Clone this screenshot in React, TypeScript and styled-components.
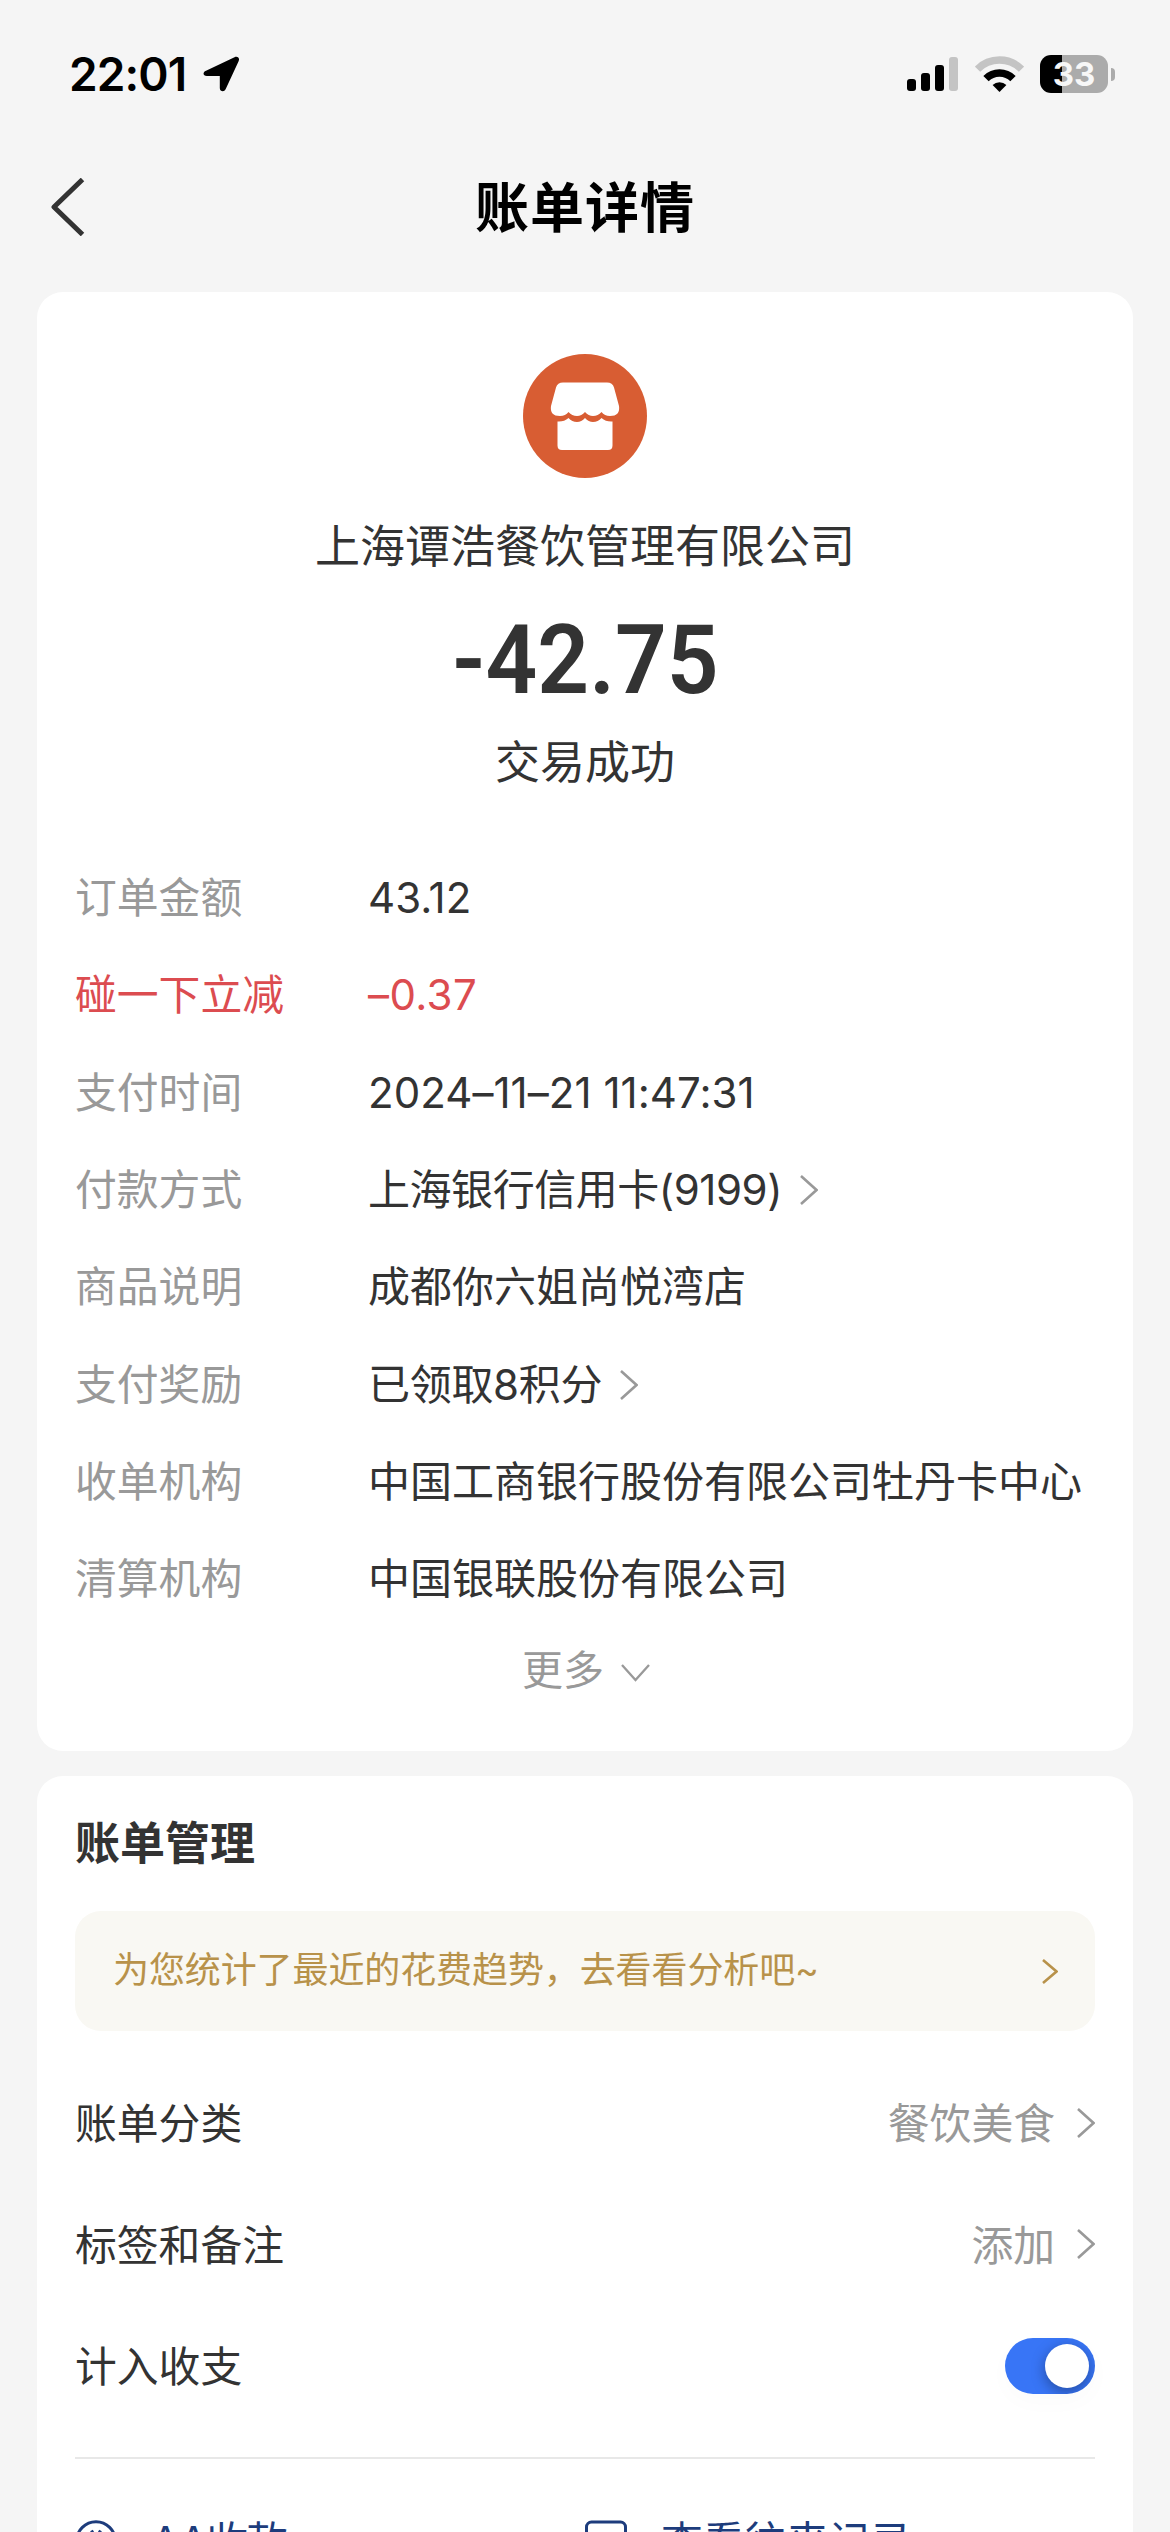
import React from "react";
import styled, { createGlobalStyle } from "styled-components";

const GlobalStyle = createGlobalStyle`
  *, *::before, *::after { box-sizing: border-box; }
  html, body { margin: 0; padding: 0; background: #f5f5f5; }
  body {
    height: 2532px;
    overflow: hidden;
    font-family: Inter, "Noto Sans CJK SC", sans-serif;
    color: #333;
  }
`;

const Screen = styled.div`
  width: 1170px;
  height: 2532px;
  overflow: hidden;
  background: #f5f5f5;
  display: flex;
  flex-direction: column;
`;

const StatusBar = styled.header`
  height: 148px;
  padding: 0 55px 0 69px;
  display: flex;
  align-items: center;
  justify-content: space-between;
  flex: none;
`;

const StatusGroup = styled.div<{ $gap: number }>`
  display: flex;
  align-items: center;
  gap: ${(p) => p.$gap}px;
`;

const Clock = styled.span`
  width: 120px;
  font-size: 46px;
  line-height: 56px;
  font-weight: 600;
  letter-spacing: -0.9px;
  color: #000;
  white-space: nowrap;
`;

const Battery = styled.div`
  display: flex;
  align-items: center;
  gap: 3px;
`;

const BatteryBody = styled.div`
  width: 68px;
  height: 38px;
  border-radius: 11px;
  background: linear-gradient(90deg, #000 0 22px, #ababab 22px);
  color: #f7f7f7;
  font-size: 33px;
  font-weight: 700;
  line-height: 38px;
  text-align: center;
`;

const BatteryCap = styled.div`
  width: 4px;
  height: 13px;
  border-radius: 0 4px 4px 0;
  background: #ababab;
`;

const NavBar = styled.nav`
  height: 144px;
  padding: 0 50px 26px;
  display: grid;
  grid-template-columns: 60px 1fr 60px;
  align-items: center;
  flex: none;
`;

const NavTitle = styled.h1`
  margin: 0;
  padding-top: 4px;
  text-align: center;
  font-size: 54px;
  line-height: 76px;
  font-weight: 700;
  letter-spacing: 1px;
  color: #000;
`;

const Card = styled.section<{ $height: number }>`
  height: ${(p) => p.$height}px;
  margin: 0 37px 25px;
  padding: 0 38px;
  border-radius: 26px;
  background: #fff;
  display: flex;
  flex-direction: column;
  flex: none;
`;

const Summary = styled.div`
  height: 557px;
  padding-top: 62px;
  display: flex;
  flex-direction: column;
  align-items: center;
  flex: none;
`;

const Merchant = styled.div`
  margin-top: 36px;
  font-size: 45px;
  line-height: 66px;
`;

const Amount = styled.div`
  margin-top: 30px;
  font-family: Roboto, sans-serif;
  font-size: 97px;
  line-height: 100px;
  font-weight: 600;
  transform: scaleX(0.936);
`;

const Outcome = styled.div`
  margin-top: 20px;
  font-size: 45px;
  line-height: 66px;
`;

const Details = styled.dl`
  margin: 0;
  display: flex;
  flex-direction: column;
`;

const DetailRow = styled.div<{ $accent?: boolean }>`
  height: 97.3px;
  padding-top: 1px;
  display: grid;
  grid-template-columns: 293px 1fr;
  align-items: center;
  font-size: 42px;
  line-height: 60px;
  white-space: nowrap;
  color: ${(p) => (p.$accent ? "#dc4c50" : "#333")};
`;

const Term = styled.dt<{ $accent?: boolean }>`
  font-size: 41.8px;
  color: ${(p) => (p.$accent ? "inherit" : "#999")};
`;

const Value = styled.dd<{ $tracking?: number }>`
  margin: 0;
  display: flex;
  align-items: center;
  gap: 18px;
  letter-spacing: ${(p) => p.$tracking ?? 0}px;
`;

const More = styled.div`
  height: 80px;
  display: flex;
  align-items: center;
  justify-content: center;
  gap: 17px;
  padding-left: 2px;
  font-size: 41px;
  color: #999;
`;

const MoreIcon = styled.span`
  display: flex;
  padding-top: 12px;
`;

const SectionTitle = styled.h2`
  margin: 35px 0 0;
  font-size: 45px;
  line-height: 66px;
  font-weight: 600;
`;

const Banner = styled.div`
  height: 120px;
  margin-top: 34px;
  padding: 0 37px 0 38px;
  border-radius: 26px;
  background: #f9f8f3;
  color: #b8924a;
  display: flex;
  align-items: center;
  justify-content: space-between;
  font-size: 36px;
  flex: none;
`;

const BannerText = styled.span`
  padding-bottom: 9px;
  letter-spacing: -0.1px;
`;

const SettingList = styled.div`
  padding: 31px 0 30px;
  display: flex;
  flex-direction: column;
  border-bottom: 2px solid #e8e8e8;
  flex: none;
`;

const SettingRow = styled.div`
  height: 121.5px;
  display: flex;
  align-items: center;
  justify-content: space-between;
  font-size: 41.8px;
`;

const SettingText = styled.span`
  padding-bottom: 3px;
`;

const SettingValue = styled.span`
  display: flex;
  align-items: center;
  gap: 22px;
  color: #999;
`;

const Toggle = styled.span`
  width: 90px;
  height: 56px;
  padding: 0 6px;
  border-radius: 28px;
  background: #3875f6;
  box-shadow: 0 8px 24px rgba(0, 0, 0, 0.02);
  overflow: hidden;
  display: flex;
  align-items: center;
  justify-content: flex-end;
`;

const Knob = styled.span`
  width: 44px;
  height: 44px;
  border-radius: 50%;
  background: #fff;
  box-shadow: 0 4px 14px rgba(0, 0, 0, 0.35);
`;

const Actions = styled.div`
  display: grid;
  grid-template-columns: 1fr 1fr;
  padding-top: 51px;
`;

const Action = styled.div`
  display: flex;
  align-items: center;
  gap: 34px;
  height: 62px;
  font-size: 41.8px;
  color: #1d3c7c;
  white-space: nowrap;
`;

const ActionText = styled.span<{ $tracking?: number }>`
  padding-bottom: 4px;
  letter-spacing: ${(p) => p.$tracking ?? 0}px;
`;

const ChevronRight = ({ w = 18, h = 30, color = "#999" }: { w?: number; h?: number; color?: string }) => (
  <svg width={w} height={h} viewBox={`0 0 ${w} ${h}`} fill="none">
    <path d={`M1 1L${w - 1.5} ${h / 2}L1 ${h - 1}`} stroke={color} strokeWidth="2.6" />
  </svg>
);

const LocationArrow = () => (
  <svg width="37" height="36" viewBox="0 0 37 36">
    <path
      d="M3 14.8 31.5 1.2C34.6 -.2 37 2 35.600 5.200L22.600 33.300C21.200 36.400 16.800 35.700 16.800 32V20H3.800C-.2 20 -.6 16.400 3 14.800Z"
      fill="#000"
    />
  </svg>
);

const Signal = () => (
  <svg width="52" height="36" viewBox="0 0 52 36">
    <rect x="0" y="23" width="9" height="12" rx="3" fill="#000" />
    <rect x="14" y="17" width="9" height="18" rx="3" fill="#000" />
    <rect x="28" y="9" width="9" height="26" rx="3" fill="#000" />
    <rect x="42" y="1" width="9" height="34" rx="3" fill="#c4c4c4" />
  </svg>
);

const Wifi = () => (
  <svg width="49" height="36" viewBox="0 0 49 36" fill="none">
    <path d="M2.500 13.200A31.200 31.200 0 0 1 46.500 13.200" stroke="#c4c4c4" strokeWidth="7.500" />
    <path d="M11 22.600A19 19 0 0 1 38 22.600" stroke="#000" strokeWidth="7.500" />
    <path d="M17.600 29A10 10 0 0 1 31.400 29L24.500 36Z" fill="#000" />
  </svg>
);

const BackIcon = () => (
  <svg width="36" height="58" viewBox="0 0 36 58" fill="none">
    <path d="M32.500 1.500 4 29 32.500 56.500" stroke="#333" strokeWidth="5" strokeLinejoin="round" />
  </svg>
);

const ShopLogo = () => (
  <svg width="124" height="124" viewBox="0 0 124 124">
    <circle cx="62" cy="62" r="62" fill="#d85d33" />
    <path
      d="M40 28.500H84Q89.500 28.500 91 33.500L96 52Q97.500 62 87 62Q81.500 62 78.500 58Q75 62 70 62Q65.500 62 62 58Q58.500 62 54 62Q49 62 45.500 58Q42.500 62 37 62Q26.500 62 28 52L33 33.500Q34.500 28.500 40 28.500Z"
      fill="#fff"
    />
    <path
      d="M34.500 67.500Q41 68 45.500 64Q49 68 54 68Q58.500 68 62 64Q65.500 68 70 68Q75 68 78.500 64Q83 68 89.500 67.500V91.500Q89.500 96 85 96H39Q34.500 96 34.500 91.500Z"
      fill="#fff"
    />
  </svg>
);

const ChevronDown = () => (
  <svg width="29" height="18" viewBox="0 0 29 18" fill="none">
    <path d="M1 1 14.500 16 28 1" stroke="#999" strokeWidth="2.300" />
  </svg>
);

const YuanCircle = () => (
  <svg width="42" height="42" viewBox="0 0 42 42" fill="none" stroke="#1d3c7c" strokeWidth="3">
    <circle cx="21" cy="21" r="19.300" />
    <path d="M16.500 10.500 21 18.500 25.500 10.500M13.500 19H28.500M13.500 25.500H28.500M21 18.500V32" />
  </svg>
);

const RecordIcon = () => (
  <svg width="42" height="42" viewBox="0 0 42 42" fill="none" stroke="#1d3c7c" strokeWidth="3">
    <rect x="1.500" y="2" width="39" height="38" rx="5" />
    <path d="M11 17H31M11 26H31" />
  </svg>
);

type Detail = { label: string; value: string; link?: boolean; accent?: boolean; tracking?: number };

const details: Detail[] = [
  { label: "订单金额", value: "43.12" },
  { label: "碰一下立减", value: "–0.37", accent: true, tracking: 0.4 },
  { label: "支付时间", value: "2024–11–21 11:47:31", tracking: 0.05 },
  { label: "付款方式", value: "上海银行信用卡(9199)", link: true, tracking: -0.45 },
  { label: "商品说明", value: "成都你六姐尚悦湾店" },
  { label: "支付奖励", value: "已领取8积分", link: true, tracking: -0.3 },
  { label: "收单机构", value: "中国工商银行股份有限公司牡丹卡中心" },
  { label: "清算机构", value: "中国银联股份有限公司" },
];

export default function App() {
  return (
    <>
      <GlobalStyle />
      <Screen lang="zh-CN">
        <StatusBar>
          <StatusGroup $gap={14}>
            <Clock>22:01</Clock>
            <LocationArrow />
          </StatusGroup>
          <StatusGroup $gap={16}>
            <Signal />
            <Wifi />
            <Battery>
              <BatteryBody>33</BatteryBody>
              <BatteryCap />
            </Battery>
          </StatusGroup>
        </StatusBar>
        <NavBar>
          <BackIcon />
          <NavTitle>账单详情</NavTitle>
        </NavBar>

        <Card $height={1459}>
          <Summary>
            <ShopLogo />
            <Merchant>上海谭浩餐饮管理有限公司</Merchant>
            <Amount>-42.75</Amount>
            <Outcome>交易成功</Outcome>
          </Summary>
          <Details>
            {details.map((d) => (
              <DetailRow key={d.label} $accent={d.accent}>
                <Term $accent={d.accent}>{d.label}</Term>
                <Value $tracking={d.tracking}>
                  {d.value}
                  {d.link && <ChevronRight />}
                </Value>
              </DetailRow>
            ))}
          </Details>
          <More>
            更多
            <MoreIcon>
              <ChevronDown />
            </MoreIcon>
          </More>
        </Card>

        <Card $height={900}>
          <SectionTitle>账单管理</SectionTitle>
          <Banner>
            <BannerText>为您统计了最近的花费趋势，去看看分析吧~</BannerText>
            <ChevronRight w={16} h={25} color="#b8924a" />
          </Banner>
          <SettingList>
            <SettingRow>
              <SettingText>账单分类</SettingText>
              <SettingValue>
                <SettingText>餐饮美食</SettingText>
                <ChevronRight />
              </SettingValue>
            </SettingRow>
            <SettingRow>
              <SettingText>标签和备注</SettingText>
              <SettingValue>
                <SettingText>添加</SettingText>
                <ChevronRight />
              </SettingValue>
            </SettingRow>
            <SettingRow>
              <SettingText>计入收支</SettingText>
              <Toggle>
                <Knob />
              </Toggle>
            </SettingRow>
          </SettingList>
          <Actions>
            <Action>
              <YuanCircle />
              <ActionText $tracking={-1.5}>AA收款</ActionText>
            </Action>
            <Action>
              <RecordIcon />
              <ActionText>查看往来记录</ActionText>
            </Action>
          </Actions>
        </Card>
      </Screen>
    </>
  );
}
